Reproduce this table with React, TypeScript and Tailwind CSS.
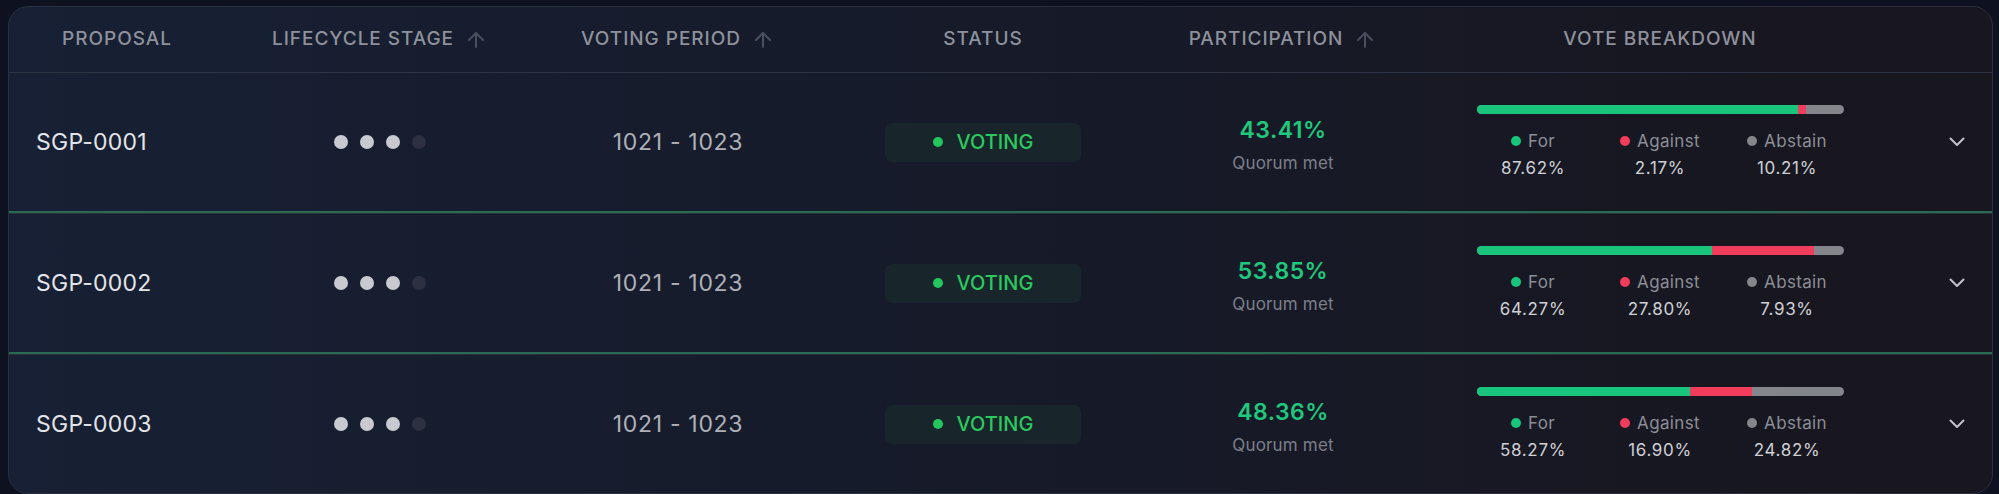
import { ArrowUp } from "lucide-react"

type Proposal = {
  id: string
  stage: number
  period: string
  participation: string
  votes: { for: number; against: number; abstain: number }
}

const proposals: Proposal[] = [
  { id: "SGP-0001", stage: 3, period: "1021 - 1023", participation: "43.41%", votes: { for: 87.62, against: 2.17, abstain: 10.21 } },
  { id: "SGP-0002", stage: 3, period: "1021 - 1023", participation: "53.85%", votes: { for: 64.27, against: 27.8, abstain: 7.93 } },
  { id: "SGP-0003", stage: 3, period: "1021 - 1023", participation: "48.36%", votes: { for: 58.27, against: 16.9, abstain: 24.82 } }
]

const cols = "grid grid-cols-[216px_310px_286px_324px_276px_478px_1fr]"

function HeaderCell({ label, sortable }: { label: string; sortable?: boolean }) {
  return (
    <div className="flex items-center justify-center gap-[10px]">
      <span className="text-[19px] font-medium tracking-[0.05em] text-[#8e919c]">{label}</span>
      {sortable ? <ArrowUp size={24} strokeWidth={2} className="text-[#4a4e5c]" aria-hidden /> : null}
    </div>
  )
}

function Chevron() {
  return (
    <svg width="16" height="10" viewBox="0 0 16 10" fill="none" aria-hidden>
      <path d="M1.5 1.5 8 8l6.5-6.5" stroke="#c3c4ca" strokeWidth="2" strokeLinecap="round" strokeLinejoin="round" />
    </svg>
  )
}

function Legend({ label, dot, value }: { label: string; dot: string; value: number }) {
  return (
    <div className="flex w-[127px] flex-col items-center">
      <div className="flex items-center gap-[7px]">
        <span className={`h-[10px] w-[10px] rounded-full ${dot}`} />
        <span className="text-[17px] leading-[24px] tracking-[0.02em] text-[#8c8e96]">{label}</span>
      </div>
      <span className="mt-[3px] text-[17px] leading-[24px] tracking-[0.04em] text-[#cfd0d5]">
        {value.toFixed(2)}%
      </span>
    </div>
  )
}

function Row({ p }: { p: Proposal }) {
  return (
    <div className={`${cols} h-[138px] items-center`}>
      <div className="pl-[27px] text-[23px] tracking-[0.01em] text-[#e3e4e8]">{p.id}</div>

      <div className="flex items-center justify-center gap-[12px]">
        {[0, 1, 2, 3].map((i) => (
          <span
            key={i}
            className={`h-[14px] w-[14px] rounded-full ${i < p.stage ? "bg-[#c9cad0]" : "bg-[#2c3040]"}`}
          />
        ))}
      </div>

      <div className="text-center text-[23px] tracking-[0.03em] text-[#aeb0b8]">{p.period}</div>

      <div className="flex justify-center">
        <div className="flex h-[39px] w-[196px] items-center justify-center gap-[14px] rounded-[7px] bg-[#18252a]">
          <span className="h-[10px] w-[10px] rounded-full bg-[#22c55e]" />
          <span className="text-[20px] font-medium text-[#2bc95f]">VOTING</span>
        </div>
      </div>

      <div className="flex flex-col items-center pt-[5px]">
        <span className="text-[23px] font-semibold leading-[28px] tracking-[0.02em] text-[#1fc87c]">
          {p.participation}
        </span>
        <span className="mt-[8px] text-[17px] leading-[22px] tracking-[0.01em] text-[#7c7f89]">Quorum met</span>
      </div>

      <div className="flex flex-col items-center">
        <div className="flex h-[9px] w-[367px] overflow-hidden rounded-full bg-[#85858c]">
          <div className="h-full bg-[#19c47c]" style={{ width: `${p.votes.for}%` }} />
          <div className="h-full bg-[#f23c5c]" style={{ width: `${p.votes.against}%` }} />
        </div>
        <div className="mt-[15px] flex justify-center">
          <Legend label="For" dot="bg-[#19c47c]" value={p.votes.for} />
          <Legend label="Against" dot="bg-[#f23c5c]" value={p.votes.against} />
          <Legend label="Abstain" dot="bg-[#85858c]" value={p.votes.abstain} />
        </div>
      </div>

      <div className="flex justify-end pr-[27px]">
        <Chevron />
      </div>
    </div>
  )
}

export default function App() {
  return (
    <div
      className="h-[494px] w-[1999px] bg-[#0d1120] pl-[8px] pr-[6px] pt-[6px]"
      style={{ fontFamily: "Inter, 'Noto Sans', sans-serif" }}
    >
      <div className="h-[488px] overflow-hidden rounded-[20px] border border-[#2a2f3d] bg-gradient-to-r from-[#172034] via-[#161a29] to-[#18161e]">
        <div className={`${cols} h-[66px] items-center border-b border-[#2d3342]`}>
          <HeaderCell label="PROPOSAL" />
          <HeaderCell label="LIFECYCLE STAGE" sortable />
          <HeaderCell label="VOTING PERIOD" sortable />
          <HeaderCell label="STATUS" />
          <HeaderCell label="PARTICIPATION" sortable />
          <HeaderCell label="VOTE BREAKDOWN" />
          <div />
        </div>
        {proposals.map((p, i) => (
          <div key={p.id}>
            {i > 0 ? <div className="h-[3px] border-b border-[#2a3038] bg-[#2a6c53]" /> : null}
            <Row p={p} />
          </div>
        ))}
      </div>
    </div>
  )
}
